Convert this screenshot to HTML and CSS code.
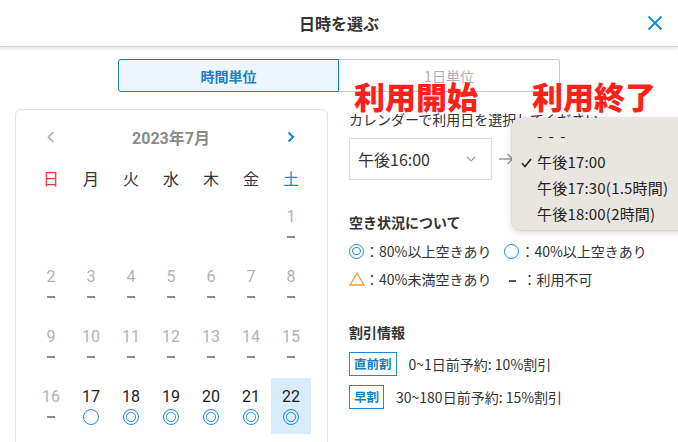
FILE: index.html
```html
<!DOCTYPE html>
<html lang="ja">
<head>
<meta charset="UTF-8" />
<meta name="viewport" content="width=device-width, initial-scale=1" />
<title>日時を選ぶ</title>
<link rel="stylesheet" href="styles.css">
</head>
<body>
<div class="modal">
  <header class="modal-head">
    <span></span>
    <h1 class="modal-title">日時を選ぶ</h1>
    <button class="close-btn" aria-label="閉じる">
      <svg width="16" height="16" viewBox="0 0 16 16"><path d="M1.5 1.5 L14.5 14.5 M14.5 1.5 L1.5 14.5" stroke="#1b8ad3" stroke-width="2" fill="none"/></svg>
    </button>
  </header>

  <div class="tabs">
    <button class="tab is-active">時間単位</button>
    <button class="tab">1日単位</button>
  </div>

  <div class="content">
    <section class="calendar">
      <div class="cal-month">
        <span class="cal-nav">
          <svg width="8" height="12" viewBox="0 0 8 12"><path d="M6.5 1 L1.5 6 L6.5 11" stroke="#b0b0b0" stroke-width="1.6" fill="none"/></svg>
        </span>
        <span class="cal-title">2023年7月</span>
        <span class="cal-nav">
          <svg width="8" height="12" viewBox="0 0 8 12"><path d="M1.5 1.5 L6 6 L1.5 10.5" stroke="#1a8ad4" stroke-width="2.2" fill="none"/></svg>
        </span>
      </div>
      <div class="cal-week">
        <span class="sun">日</span><span>月</span><span>火</span><span>水</span><span>木</span><span>金</span><span class="sat">土</span>
      </div>
      <div class="cal-grid">
        <div class="day"></div><div class="day"></div><div class="day"></div><div class="day"></div><div class="day"></div><div class="day"></div>
        <div class="day is-past"><span class="num">1</span><span class="mark none"></span></div>

        <div class="day is-past"><span class="num">2</span><span class="mark none"></span></div>
        <div class="day is-past"><span class="num">3</span><span class="mark none"></span></div>
        <div class="day is-past"><span class="num">4</span><span class="mark none"></span></div>
        <div class="day is-past"><span class="num">5</span><span class="mark none"></span></div>
        <div class="day is-past"><span class="num">6</span><span class="mark none"></span></div>
        <div class="day is-past"><span class="num">7</span><span class="mark none"></span></div>
        <div class="day is-past"><span class="num">8</span><span class="mark none"></span></div>

        <div class="day is-past"><span class="num">9</span><span class="mark none"></span></div>
        <div class="day is-past"><span class="num">10</span><span class="mark none"></span></div>
        <div class="day is-past"><span class="num">11</span><span class="mark none"></span></div>
        <div class="day is-past"><span class="num">12</span><span class="mark none"></span></div>
        <div class="day is-past"><span class="num">13</span><span class="mark none"></span></div>
        <div class="day is-past"><span class="num">14</span><span class="mark none"></span></div>
        <div class="day is-past"><span class="num">15</span><span class="mark none"></span></div>

        <div class="day is-past"><span class="num">16</span><span class="mark none"></span></div>
        <div class="day"><span class="num">17</span><span class="mark single"></span></div>
        <div class="day"><span class="num">18</span><span class="mark double"></span></div>
        <div class="day"><span class="num">19</span><span class="mark double"></span></div>
        <div class="day"><span class="num">20</span><span class="mark double"></span></div>
        <div class="day"><span class="num">21</span><span class="mark double"></span></div>
        <div class="day is-selected"><span class="num">22</span><span class="mark double"></span></div>
      </div>
    </section>

    <section class="side">
      <p class="hint">カレンダーで利用日を選択してください</p>
      <div class="time-row">
        <div class="select">
          <span>午後16:00</span>
          <svg width="10" height="6" viewBox="0 0 10 6"><path d="M1 1 L5 5 L9 1" stroke="#a0a0a0" stroke-width="1.2" fill="none"/></svg>
        </div>
        <svg class="arrow" width="15" height="12" viewBox="0 0 15 12"><path d="M0 6 H13.5 M8.5 1 L13.5 6 L8.5 11" stroke="#9a9a9a" stroke-width="1.3" fill="none"/></svg>
      </div>

      <h2 class="side-title legend-title">空き状況について</h2>
      <div class="legend">
        <div class="legend-row">
          <span class="legend-item"><span class="mark double small"></span>：80%以上空きあり</span>
          <span class="legend-item"><span class="mark single small"></span>：40%以上空きあり</span>
        </div>
        <div class="legend-row">
          <span class="legend-item">
            <svg class="tri" width="16" height="14" viewBox="0 0 16 14"><path d="M8 1.2 L15 13 H1 Z" stroke="#f39a3c" stroke-width="1.3" fill="none"/></svg>：40%未満空きあり</span>
          <span class="legend-item legend-none"><span class="dash"></span>：利用不可</span>
        </div>
      </div>

      <h2 class="side-title discount-title">割引情報</h2>
      <div class="discounts">
        <div class="discount"><span class="badge">直前割</span><span>0~1日前予約: 10%割引</span></div>
        <div class="discount"><span class="badge">早割</span><span>30~180日前予約: 15%割引</span></div>
      </div>
    </section>
  </div>

  <div class="note note-start">利用開始</div>
  <div class="note note-end">利用終了</div>

  <ul class="time-menu">
    <li class="is-empty">- - -</li>
    <li class="is-checked">
      <svg class="check" width="11" height="10" viewBox="0 0 11 10"><path d="M1 5.2 L4 8.5 L10 1" stroke="#222" stroke-width="1.6" fill="none"/></svg>午後17:00</li>
    <li>午後17:30(1.5時間)</li>
    <li>午後18:00(2時間)</li>
  </ul>
</div>
</body>
</html>
```

FILE: styles.css
```css
:root {
  --blue: #1a8ad4;
  --blue-dark: #1a7fc1;
  --text: #333333;
  --muted: #b3b3b3;
  --font: Roboto, "Noto Sans CJK JP", sans-serif;
}
* {
  box-sizing: border-box;
}
html, body {
  margin: 0;
  padding: 0;
  height: 100%;
  overflow: hidden;
  background: #ffffff;
  color: var(--text);
  font-family: var(--font);
}
.modal {
  position: relative;
  height: 100%;
}

/* header */
.modal-head {
  height: 47px;
  display: grid;
  grid-template-columns: 1fr auto 1fr;
  align-items: center;
  border-bottom: 1px solid #d4d4d4;
  box-shadow: 0 1px 3px rgba(0, 0, 0, 0.14);
}
.modal-title {
  margin: 0;
  font-size: 16px;
  font-weight: 700;
  color: #333;
  font-family: "Noto Sans CJK JP", sans-serif;
}
.close-btn {
  justify-self: end;
  margin-right: 15px;
  padding: 0;
  border: 0;
  background: none;
  width: 16px;
  height: 16px;
  display: flex;
}

/* tabs */
.tabs {
  display: flex;
  justify-content: center;
  margin-top: 12px;
}
.tab {
  width: 221px;
  height: 33px;
  border: 1px solid #c8c8c8;
  background: #fff;
  color: #b0b0b0;
  font-family: "Noto Sans CJK JP", sans-serif;
  font-size: 14px;
  padding: 0;
}
.tab:first-child {
  border-radius: 3px 0 0 3px;
}
.tab:last-child {
  border-left: 0;
  border-radius: 0 3px 3px 0;
}
.tab.is-active {
  border-color: var(--blue-dark);
  background: #eef6fd;
  color: var(--blue-dark);
  font-weight: 700;
}

/* layout */
.content {
  display: flex;
  gap: 21px;
  padding: 17px 0 0 15px;
}

/* calendar */
.calendar {
  width: 313px;
  height: 340px;
  border: 1px solid #e3e3e3;
  border-radius: 6px;
  padding: 15px 16px 0 15px;
}
.cal-month,
.cal-week,
.cal-grid {
  display: grid;
  grid-template-columns: repeat(7, 40px);
}
.cal-month {
  height: 24px;
  align-items: center;
}
.cal-nav {
  display: flex;
  justify-content: center;
}
.cal-title {
  grid-column: 2 / 7;
  text-align: center;
  font-size: 16px;
  font-weight: 700;
  color: #8a8a8a;
}
.cal-week {
  margin-top: 19px;
  line-height: 20px;
  font-size: 16px;
  text-align: center;
  font-family: "Noto Sans CJK JP", sans-serif;
  color: #333;
}
.cal-week .sun { color: #e53935; }
.cal-week .sat { color: var(--blue); }
.cal-grid {
  margin-top: 10px;
  grid-auto-rows: 56px;
  row-gap: 4px;
}
.day {
  display: flex;
  flex-direction: column;
  align-items: center;
  padding-top: 9px;
}
.day .num {
  line-height: 20px;
  font-size: 16px;
  color: #222;
}
.day.is-past .num {
  color: var(--muted);
}
.day.is-selected {
  background: #d9ecfb;
}
.day .mark {
  margin-top: 2px;
}
.mark {
  display: block;
  position: relative;
  flex-shrink: 0;
}
.mark.none {
  width: 8px;
  height: 2px;
  margin-top: 9px !important;
  background: #8c8c8c;
}
.mark.single,
.mark.double {
  width: 16px;
  height: 16px;
  border: 1.4px solid var(--blue);
  border-radius: 50%;
}
.mark.double::after {
  content: "";
  position: absolute;
  inset: 2.3px;
  border: 1.4px solid var(--blue);
  border-radius: 50%;
}
.mark.small {
  width: 15px;
  height: 15px;
}
.mark.small.double::after {
  inset: 2.1px;
}

/* side panel */
.side {
  font-family: "Noto Sans CJK JP", sans-serif;
  font-size: 14px;
  line-height: 20px;
}
.hint {
  margin: 0;
  color: #333;
  white-space: nowrap;
}
.time-row {
  display: flex;
  align-items: center;
  gap: 7px;
  margin-top: 9px;
}
.select {
  width: 143px;
  height: 42px;
  border: 1px solid #dcdcdc;
  display: flex;
  align-items: center;
  justify-content: space-between;
  padding: 0 15px 0 8px;
  font-size: 16px;
  color: #333;
}
.side-title {
  margin: 0;
  font-size: 14px;
  font-weight: 700;
  line-height: 20px;
}
.legend-title {
  margin-top: 32px;
}
.legend {
  display: flex;
  flex-direction: column;
  gap: 8px;
  margin-top: 9px;
}
.legend-row {
  display: flex;
  gap: 13px;
}
.legend-item {
  display: flex;
  align-items: center;
  white-space: nowrap;
}
.legend-item .mark {
  margin-right: 1px;
}
.legend-none {
  padding-left: 5px;
}
.dash {
  display: block;
  width: 7px;
  height: 1.5px;
  margin-top: 4px;
  margin-right: 6px;
  background: #555;
}
.discount-title {
  margin-top: 33px;
}
.discounts {
  display: flex;
  flex-direction: column;
  gap: 9px;
  margin-top: 10px;
}
.discount {
  display: flex;
  align-items: center;
  gap: 12px;
}
.badge {
  height: 24px;
  padding: 0 4px;
  border: 1.5px solid var(--blue);
  color: var(--blue-dark);
  font-size: 12.5px;
  font-weight: 700;
  line-height: 21px;
}

/* overlays */
.note {
  position: absolute;
  top: 81px;
  font-family: "Noto Sans CJK JP", sans-serif;
  font-size: 31px;
  font-weight: 900;
  line-height: 30px;
  color: #ff2119;
  white-space: nowrap;
}
.note-start { left: 354px; }
.note-end { left: 532px; }

.time-menu {
  position: absolute;
  left: 512px;
  top: 118px;
  width: 180px;
  height: 112px;
  margin: 0;
  padding: 5px 0 0 25px;
  list-style: none;
  background: #e9e5e1;
  border-radius: 8px;
  box-shadow: 0 2px 7px rgba(0, 0, 0, 0.18), 0 0 0 0.5px rgba(0, 0, 0, 0.12);
  font-family: "Noto Sans CJK JP", sans-serif;
  font-size: 15px;
  line-height: 26px;
  color: #222;
}
.time-menu li {
  position: relative;
  white-space: nowrap;
  letter-spacing: 0.2px;
}
.time-menu .is-empty {
  letter-spacing: 1.5px;
}
.time-menu .check {
  position: absolute;
  left: -16px;
  top: 9px;
}
```
